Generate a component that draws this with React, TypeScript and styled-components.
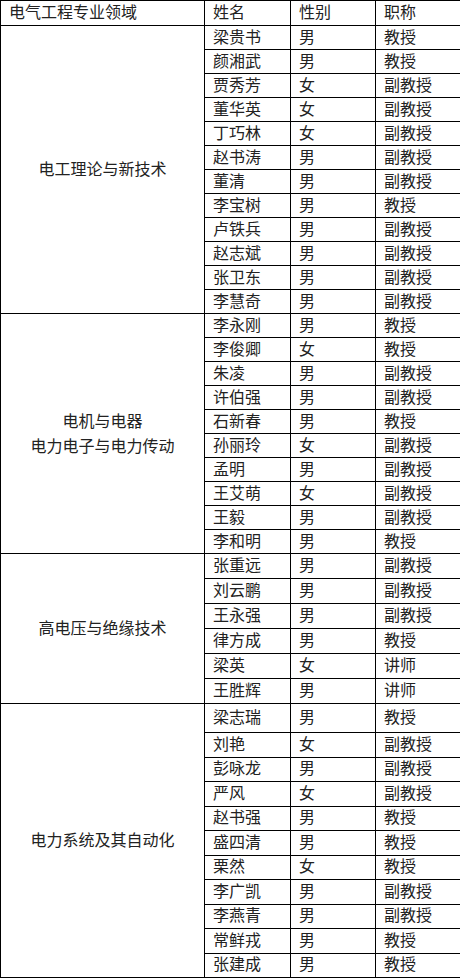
import React from 'react';
import styled, { createGlobalStyle } from 'styled-components';

const GlobalStyle = createGlobalStyle`
  html, body {
    margin: 0;
    padding: 0;
    background: #ffffff;
  }
`;

const Table = styled.table`
  border-collapse: collapse;
  table-layout: fixed;
  width: 460px;
  font-family: "Liberation Serif", "Noto Sans CJK SC", serif;
  font-size: 16px;
  color: #222;
`;

const Row = styled.tr<{ $h: number }>`
  height: ${(p) => p.$h}px;
`;

const Cell = styled.td`
  border: 1px solid #000;
  padding: 0 0 0 8px;
  vertical-align: middle;
  white-space: nowrap;
  line-height: 18px;
`;

const HeadCell = styled(Cell)`
  font-weight: normal;
`;

const GroupCell = styled.td`
  border: 1px solid #000;
  padding: 0;
  text-align: center;
  vertical-align: middle;
  line-height: 25px;
`;

type Person = [string, string, string];

interface Group {
  label: string[];
  rowH: number;
  firstH?: number;
  people: Person[];
}

const groups: Group[] = [
  {
    label: ['电工理论与新技术'],
    rowH: 24,
    people: [
      ['梁贵书', '男', '教授'],
      ['颜湘武', '男', '教授'],
      ['贾秀芳', '女', '副教授'],
      ['董华英', '女', '副教授'],
      ['丁巧林', '女', '副教授'],
      ['赵书涛', '男', '副教授'],
      ['董清', '男', '副教授'],
      ['李宝树', '男', '教授'],
      ['卢铁兵', '男', '副教授'],
      ['赵志斌', '男', '副教授'],
      ['张卫东', '男', '副教授'],
      ['李慧奇', '男', '副教授'],
    ],
  },
  {
    label: ['电机与电器', '电力电子与电力传动'],
    rowH: 24,
    people: [
      ['李永刚', '男', '教授'],
      ['李俊卿', '女', '教授'],
      ['朱凌', '男', '副教授'],
      ['许伯强', '男', '副教授'],
      ['石新春', '男', '教授'],
      ['孙丽玲', '女', '副教授'],
      ['孟明', '男', '副教授'],
      ['王艾萌', '女', '副教授'],
      ['王毅', '男', '副教授'],
      ['李和明', '男', '教授'],
    ],
  },
  {
    label: ['高电压与绝缘技术'],
    rowH: 25,
    people: [
      ['张重远', '男', '副教授'],
      ['刘云鹏', '男', '副教授'],
      ['王永强', '男', '副教授'],
      ['律方成', '男', '教授'],
      ['梁英', '女', '讲师'],
      ['王胜辉', '男', '讲师'],
    ],
  },
  {
    label: ['电力系统及其自动化'],
    rowH: 24.5,
    firstH: 29,
    people: [
      ['梁志瑞', '男', '教授'],
      ['刘艳', '女', '副教授'],
      ['彭咏龙', '男', '副教授'],
      ['严风', '女', '副教授'],
      ['赵书强', '男', '教授'],
      ['盛四清', '男', '教授'],
      ['栗然', '女', '教授'],
      ['李广凯', '男', '副教授'],
      ['李燕青', '男', '副教授'],
      ['常鲜戎', '男', '教授'],
      ['张建成', '男', '教授'],
    ],
  },
];

export default function App() {
  return (
    <>
      <GlobalStyle />
      <Table>
        <colgroup>
          <col style={{ width: 204 }} />
          <col style={{ width: 86 }} />
          <col style={{ width: 85 }} />
          <col style={{ width: 85 }} />
        </colgroup>
        <tbody>
          <Row $h={25}>
            <HeadCell>电气工程专业领域</HeadCell>
            <HeadCell>姓名</HeadCell>
            <HeadCell>性别</HeadCell>
            <HeadCell>职称</HeadCell>
          </Row>
          {groups.map((g) =>
            g.people.map((p, i) => (
              <Row key={p[0]} $h={i === 0 && g.firstH ? g.firstH : g.rowH}>
                {i === 0 && (
                  <GroupCell rowSpan={g.people.length}>
                    {g.label.map((line) => (
                      <div key={line}>{line}</div>
                    ))}
                  </GroupCell>
                )}
                <Cell>{p[0]}</Cell>
                <Cell>{p[1]}</Cell>
                <Cell>{p[2]}</Cell>
              </Row>
            ))
          )}
        </tbody>
      </Table>
    </>
  );
}
